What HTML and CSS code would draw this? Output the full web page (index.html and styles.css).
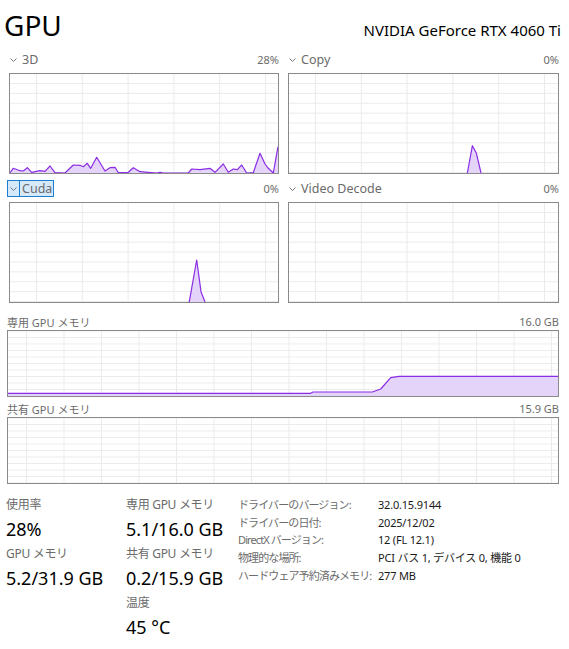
FILE: index.html
```html
<!DOCTYPE html>
<html lang="ja">
<head>
    <meta charset="UTF-8">
    <meta name="viewport" content="width=device-width, initial-scale=1.0">
    <title>GPU</title>
    <link rel="stylesheet" href="styles.css">
</head>
<body>
    <div class="page">
        <header class="title-row">
            <h1 class="title">GPU</h1>
            <span class="device">NVIDIA GeForce RTX 4060 Ti</span>
        </header>

        <!-- Engine graphs -->
        <section class="engines">
            <div class="engine">
                <div class="engine-head">
                    <span class="engine-name">
                        <span class="chev"><svg width="7" height="4" viewBox="0 0 7 4"><polyline points="0.5,0.5 3.5,3.5 6.5,0.5"/></svg></span>
                        <span class="engine-label">3D</span>
                    </span>
                    <span class="engine-value">28%</span>
                </div>
                <div class="chart">
                    <svg viewBox="0 0 268 99" preserveAspectRatio="none">
                        <path class="area" d="M0,99 L0,98.7 3.3,94.3 10,96.7 13.3,97 17.3,93.7 21.7,98.3 30,96.7 35,97.3 40,92 45,98.7 55,99 63.3,91 70,91.3 73.3,92.7 77.3,89.3 80.7,94.3 86.7,83.3 95,97 100,93.7 105,93.3 108.3,98.7 118.3,98.3 123.3,93.7 130,97.7 138.3,98.3 146.7,99 150,98.3 153.3,99 178.3,99 181.7,95 190,95.7 200,94.3 205,98.3 213.3,90 218.3,98.3 223.3,95 227.3,95.7 231.7,91 236.7,99 243.3,98.7 250,79.3 255,90 258.3,94.3 263.3,99 268,72.7 268,99 Z"/>
                        <polyline class="line" points="0,98.7 3.3,94.3 10,96.7 13.3,97 17.3,93.7 21.7,98.3 30,96.7 35,97.3 40,92 45,98.7 55,99 63.3,91 70,91.3 73.3,92.7 77.3,89.3 80.7,94.3 86.7,83.3 95,97 100,93.7 105,93.3 108.3,98.7 118.3,98.3 123.3,93.7 130,97.7 138.3,98.3 146.7,99 150,98.3 153.3,99 178.3,99 181.7,95 190,95.7 200,94.3 205,98.3 213.3,90 218.3,98.3 223.3,95 227.3,95.7 231.7,91 236.7,99 243.3,98.7 250,79.3 255,90 258.3,94.3 263.3,99 268,72.7"/>
                    </svg>
                </div>
            </div>

            <div class="engine">
                <div class="engine-head">
                    <span class="engine-name">
                        <span class="chev"><svg width="7" height="4" viewBox="0 0 7 4"><polyline points="0.5,0.5 3.5,3.5 6.5,0.5"/></svg></span>
                        <span class="engine-label">Copy</span>
                    </span>
                    <span class="engine-value">0%</span>
                </div>
                <div class="chart">
                    <svg viewBox="0 0 268 99" preserveAspectRatio="none">
                        <path class="area" d="M177.7,99 L182.7,71.7 186.7,79.3 191.3,99 Z"/>
                        <polyline class="line" points="177.7,99 182.7,71.7 186.7,79.3 191.3,99"/>
                    </svg>
                </div>
            </div>

            <div class="engine">
                <div class="engine-head">
                    <span class="engine-name selected">
                        <span class="chev"><svg width="7" height="4" viewBox="0 0 7 4"><polyline points="0.5,0.5 3.5,3.5 6.5,0.5"/></svg></span>
                        <span class="engine-label">Cuda</span>
                    </span>
                    <span class="engine-value">0%</span>
                </div>
                <div class="chart">
                    <svg viewBox="0 0 268 99" preserveAspectRatio="none">
                        <path class="area" d="M178.5,99 L179.3,98.7 186.7,57 191,88.7 195,99 Z"/>
                        <polyline class="line" points="178.5,99 179.3,98.7 186.7,57 191,88.7 195,99"/>
                    </svg>
                </div>
            </div>

            <div class="engine">
                <div class="engine-head">
                    <span class="engine-name">
                        <span class="chev"><svg width="7" height="4" viewBox="0 0 7 4"><polyline points="0.5,0.5 3.5,3.5 6.5,0.5"/></svg></span>
                        <span class="engine-label">Video Decode</span>
                    </span>
                    <span class="engine-value">0%</span>
                </div>
                <div class="chart"></div>
            </div>
        </section>

        <!-- Memory graphs -->
        <section class="memory">
            <div class="mem-head">
                <span>専用 GPU メモリ</span>
                <span class="mem-max">16.0 GB</span>
            </div>
            <div class="chart mem-chart">
                <svg viewBox="0 0 550 65" preserveAspectRatio="none">
                    <path class="area" d="M0,65 L0,62.3 302.7,62.3 305,61 364.3,61 372.7,58 382.7,46.7 391,45.3 550,45.3 550,65 Z"/>
                    <polyline class="line" points="0,62.3 302.7,62.3 305,61 364.3,61 372.7,58 382.7,46.7 391,45.3 550,45.3"/>
                </svg>
            </div>

            <div class="mem-head">
                <span>共有 GPU メモリ</span>
                <span class="mem-max">15.9 GB</span>
            </div>
            <div class="chart mem-chart"></div>
        </section>

        <!-- Summary -->
        <section class="stats">
            <div class="stat-col first">
                <div class="stat-label">使用率</div>
                <div class="stat-value">28%</div>
                <div class="stat-label">GPU メモリ</div>
                <div class="stat-value">5.2/31.9 GB</div>
            </div>
            <div class="stat-col second">
                <div class="stat-label">専用 GPU メモリ</div>
                <div class="stat-value">5.1/16.0 GB</div>
                <div class="stat-label">共有 GPU メモリ</div>
                <div class="stat-value">0.2/15.9 GB</div>
                <div class="stat-label">温度</div>
                <div class="stat-value">45 °C</div>
            </div>
            <div class="info-table">
                <span class="info-key">ドライバーのバージョン:</span>
                <span class="info-val">32.0.15.9144</span>
                <span class="info-key">ドライバーの日付:</span>
                <span class="info-val">2025/12/02</span>
                <span class="info-key">DirectX バージョン:</span>
                <span class="info-val">12 (FL 12.1)</span>
                <span class="info-key">物理的な場所:</span>
                <span class="info-val">PCI バス 1, デバイス 0, 機能 0</span>
                <span class="info-key">ハードウェア予約済みメモリ:</span>
                <span class="info-val">277 MB</span>
            </div>
        </section>
    </div>
</body>
</html>
```

FILE: styles.css
```css
:root {
    --text-color: #000000;
    --muted-color: #6b6b6b;
    --chart-border: #8a8a8a;
    --grid-color: #ebebeb;
    --line-color: #8b2de4;
    --fill-color: #e4d4fa;
    --select-bg: #d5e9fb;
    --select-border: #1a7fd0;
}

* {
    margin: 0;
    padding: 0;
    box-sizing: border-box;
    font-family: 'Noto Sans', 'Noto Sans CJK JP', sans-serif;
}

body {
    background: white;
    color: var(--text-color);
}

.page {
    width: 569px;
    padding: 5px 10px 0 7px;
}

.title-row {
    display: flex;
    justify-content: space-between;
    align-items: baseline;
    height: 40px;
}

.title {
    font-size: 28px;
    font-weight: 400;
    line-height: 40px;
    margin-left: -3px;
}

.device {
    font-size: 15px;
    margin-right: -2px;
}

/* Engine graphs */
.engines {
    display: grid;
    grid-template-columns: 272px 273px;
    column-gap: 7px;
    row-gap: 6px;
    margin-top: 6px;
}

.engine-head {
    display: flex;
    justify-content: space-between;
    align-items: center;
    height: 17px;
    margin-bottom: 5px;
}

.engine-name {
    display: flex;
    align-items: stretch;
    height: 17px;
    border: 1px solid transparent;
    color: var(--muted-color);
    font-size: 12.5px;
}

.chev {
    display: flex;
    align-items: center;
    justify-content: center;
    width: 12px;
    border-right: 1px solid transparent;
}

.chev svg polyline {
    fill: none;
    stroke: #7a7a7a;
    stroke-width: 1;
}

.engine-label {
    display: flex;
    align-items: center;
    padding: 0 1px 0 2px;
    line-height: 15px;
}

.engine-name.selected {
    background: var(--select-bg);
    border-color: var(--select-border);
}

.engine-name.selected .chev {
    border-right-color: var(--select-border);
}

.engine-value {
    color: var(--muted-color);
    font-size: 11px;
}

.chart {
    height: 101px;
    margin-left: 2px;
    border: 1px solid var(--chart-border);
    background-color: white;
    background-image:
        linear-gradient(to right, var(--grid-color) 1px, transparent 1px),
        linear-gradient(to bottom, var(--grid-color) 1px, transparent 1px);
    background-size: 45.8px 100%, 100% 9.9px;
    background-position: 26px 0, 0 9px;
}

.chart svg {
    display: block;
    width: 100%;
    height: 100%;
}

.chart .area {
    fill: var(--fill-color);
    stroke: none;
}

.chart .line {
    fill: none;
    stroke: var(--line-color);
    stroke-width: 1.2;
    stroke-linejoin: round;
    vector-effect: non-scaling-stroke;
}

/* Memory graphs */
.memory {
    margin-top: 10px;
}

.mem-head {
    display: flex;
    justify-content: space-between;
    align-items: center;
    height: 17px;
    color: var(--muted-color);
    font-size: 11px;
}

.mem-head + .chart + .mem-head {
    margin-top: 3px;
}

.mem-chart {
    height: 67px;
    margin-left: 0;
    background-size: 37.5px 100%, 100% 6.5px;
    background-position: 18px 0, 0 6px;
}

/* Summary */
.stats {
    display: flex;
    margin-top: 11px;
}

.stat-col.first {
    width: 120px;
    margin-left: -1px;
}

.stat-col.second {
    width: 112px;
}

.stat-label {
    color: var(--muted-color);
    font-size: 12px;
    line-height: 20px;
    letter-spacing: -0.3px;
}

.stat-value {
    font-size: 18px;
    line-height: 29px;
}

.info-table {
    display: grid;
    grid-template-columns: 140px auto;
    align-content: start;
    font-size: 11px;
    line-height: 17.7px;
    margin-top: 1px;
    white-space: nowrap;
}

.info-key {
    color: var(--muted-color);
    letter-spacing: -0.9px;
}

.info-val {
    color: #1a1a1a;
    letter-spacing: -0.2px;
}
```
